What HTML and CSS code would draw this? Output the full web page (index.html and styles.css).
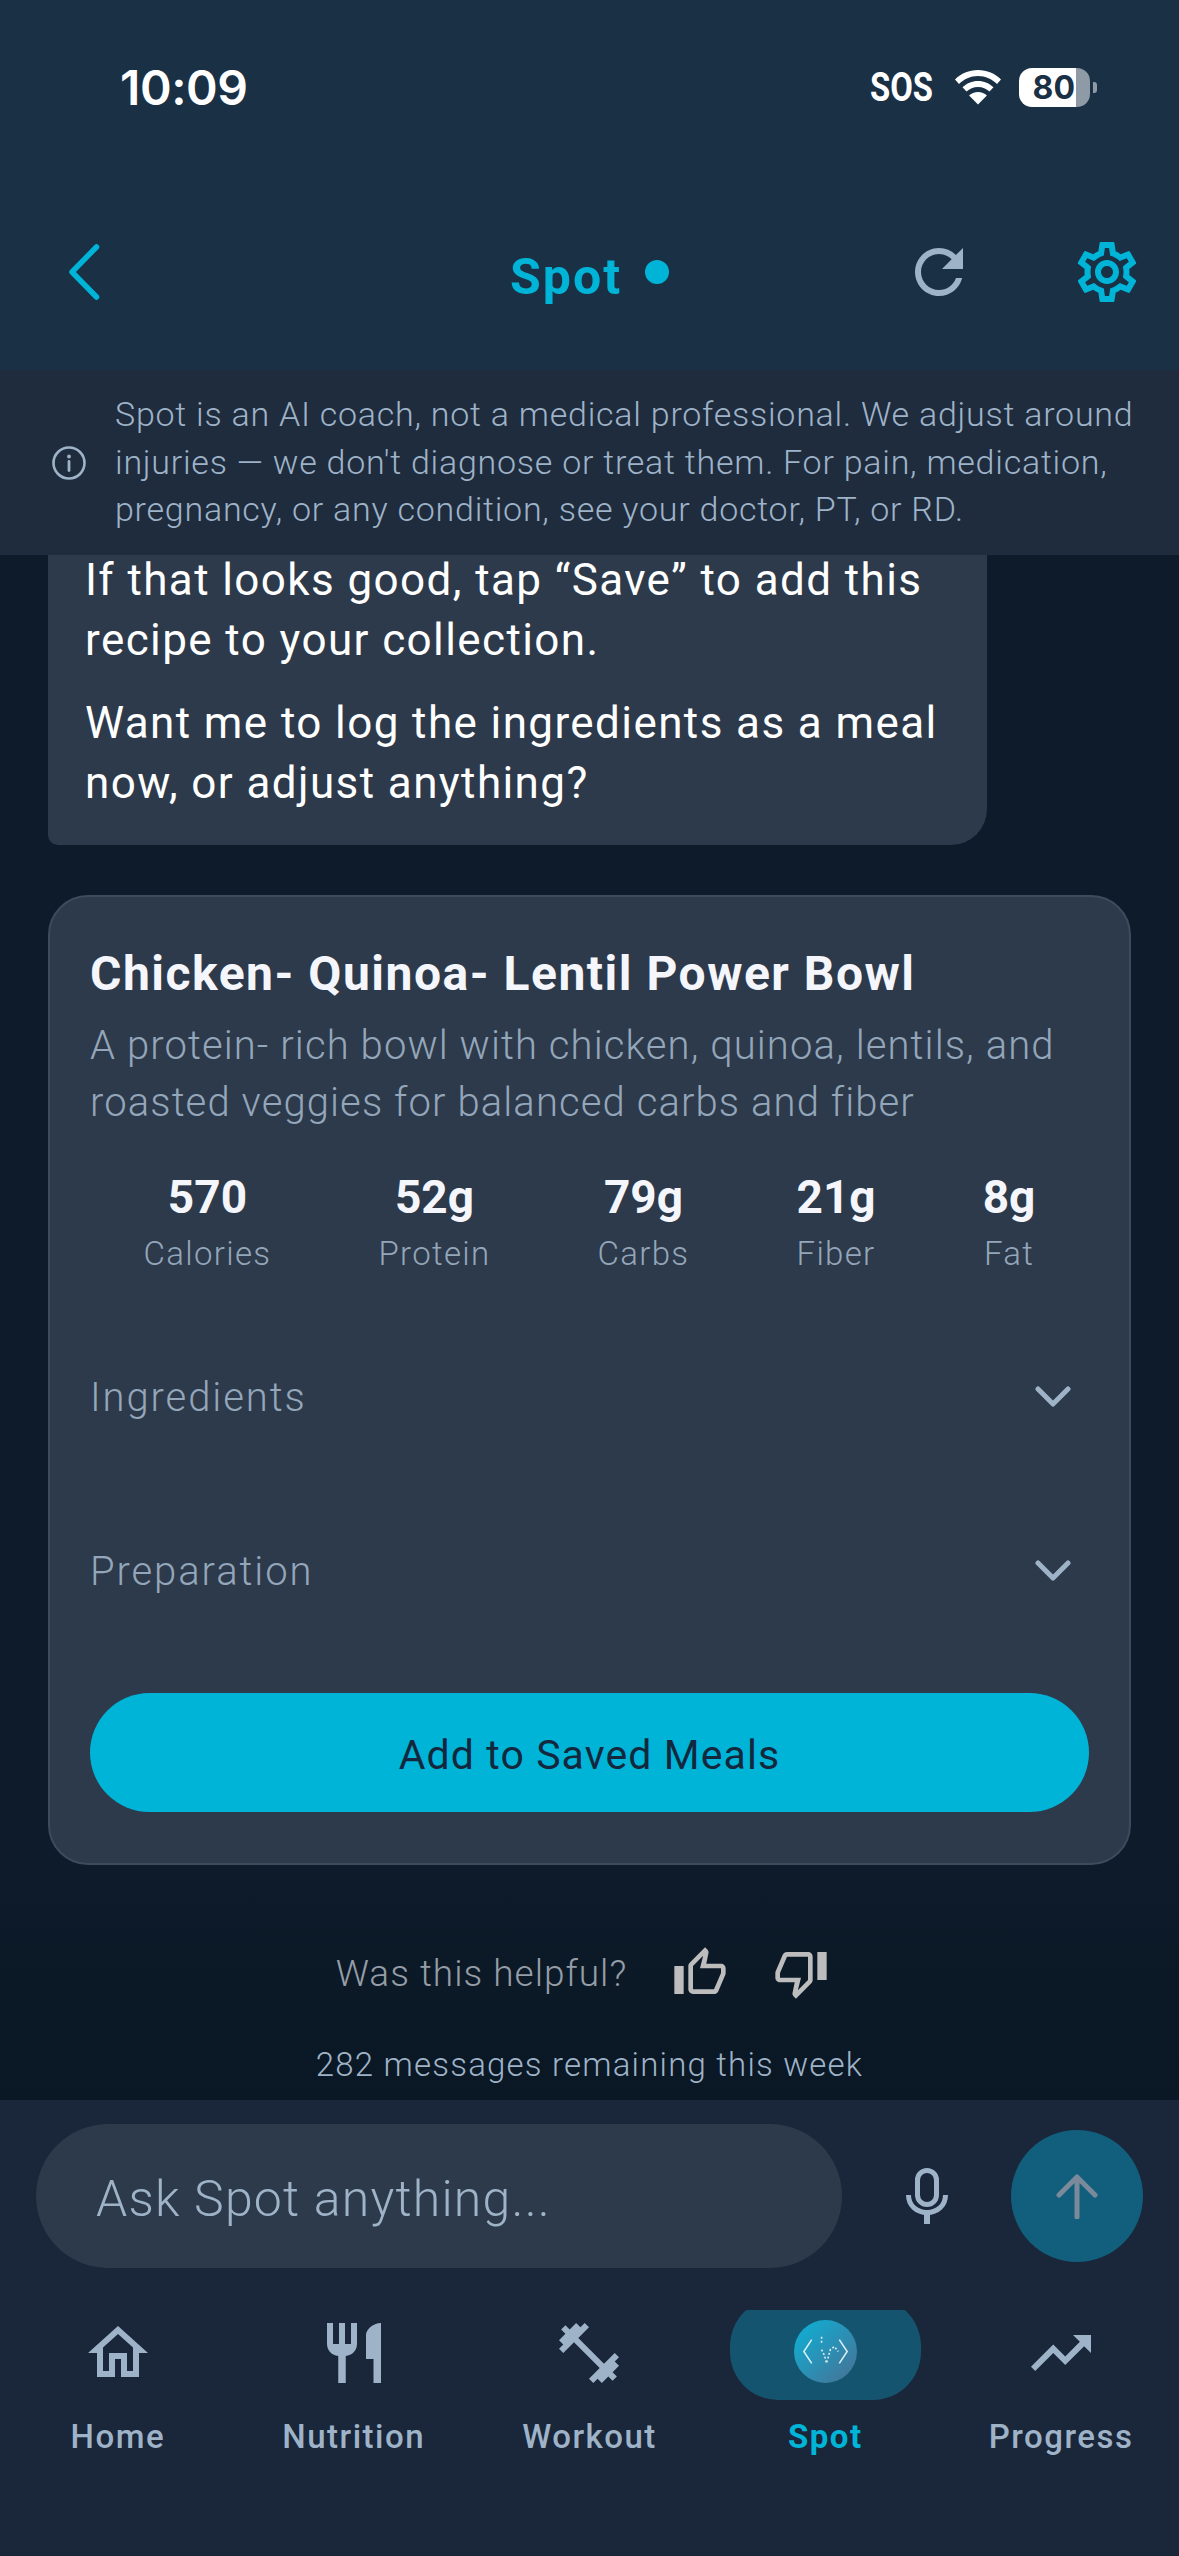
FILE: index.html
```html
<!DOCTYPE html>
<html lang="en">
<head>
<meta charset="utf-8">
<title>Spot</title>
<link rel="stylesheet" href="styles.css">
</head>
<body>
<div class="app">
  <header class="header">
    <div class="status">
      <span class="time">10:09</span>
      <div class="status-right">
        <span class="sos">SOS</span>
        <svg class="wifi" viewBox="0 0 48 36"><path d="M24 1C15 1 7 4.500 1 10.500l4 4.500C10 10 16.500 7 24 7s14 3 19 8l4-4.500C41 4.500 33 1 24 1z" fill="#fff"/><path d="M24 12c-6 0-11.500 2.300-15.500 6.300l4 4.300C15.500 19.700 19.500 18 24 18s8.500 1.700 11.500 4.600l4-4.300C35.500 14.300 30 12 24 12z" fill="#fff"/><path d="M24 23c-3.500 0-6.600 1.400-8.900 3.600L24 35.500l8.900-8.900C30.600 24.400 27.500 23 24 23z" fill="#fff"/></svg>
        <div class="battery"><span class="battery-fill">80</span><span class="battery-rest"></span></div>
        <span class="battery-nub"></span>
      </div>
    </div>
    <div class="topbar">
      <svg class="back" viewBox="0 0 32 56"><path d="M28.500 3 4 28l24.500 25" fill="none" stroke="#00b4d8" stroke-width="5.500" stroke-linecap="round" stroke-linejoin="round"/></svg>
      <div class="title"><span>Spot</span><i class="dot"></i></div>
      <svg class="refresh" viewBox="0 0 24 24"><path fill="#9fb3c8" d="M17.650 6.350A7.958 7.958 0 0 0 12 4c-4.420 0-7.990 3.580-7.990 8s3.570 8 7.990 8c3.730 0 6.840-2.550 7.730-6h-2.080A5.990 5.990 0 0 1 12 18c-3.310 0-6-2.690-6-6s2.690-6 6-6c1.660 0 3.140.690 4.220 1.780L13 11h7V4l-2.350 2.350z"/></svg>
      <svg class="gear" viewBox="0 0 24 24"><path fill="#00b4d8" d="M19.430 12.980c.040-.320.070-.640.070-.980 0-.340-.030-.660-.070-.980l2.110-1.650c.190-.150.240-.420.120-.640l-2-3.460c-.120-.220-.390-.300-.610-.220l-2.490 1c-.520-.400-1.080-.730-1.690-.980l-.380-2.650C14.460 2.180 14.250 2 14 2h-4c-.250 0-.460.180-.490.420l-.380 2.650c-.610.250-1.170.590-1.690.980l-2.490-1c-.230-.090-.490 0-.610.220l-2 3.460c-.130.220-.070.490.120.640l2.110 1.650c-.040.320-.070.650-.070.980 0 .330.030.660.070.980l-2.110 1.650c-.190.150-.240.420-.120.640l2 3.460c.120.220.390.300.610.220l2.490-1c.520.400 1.080.730 1.690.980l.380 2.650c.030.240.240.420.490.420h4c.250 0 .460-.180.490-.420l.380-2.650c.610-.250 1.170-.590 1.690-.980l2.490 1c.230.090.490 0 .610-.220l2-3.460c.120-.220.070-.490-.120-.640l-2.110-1.650zM17.450 11.270c.040.310.050.520.050.730 0 .210-.020.430-.050.730l-.140 1.130.890.700 1.080.840-.700 1.210-1.270-.510-1.040-.420-.900.680c-.430.320-.840.560-1.250.730l-1.060.430-.160 1.130-.200 1.350h-1.400l-.190-1.350-.160-1.130-1.060-.430c-.430-.180-.830-.410-1.230-.710l-.910-.700-1.060.430-1.270.510-.700-1.210 1.080-.84.890-.700-.140-1.130c-.030-.310-.050-.540-.050-.740s.020-.430.050-.730l.140-1.130-.890-.700-1.080-.840.700-1.210 1.270.510 1.040.420.900-.680c.430-.320.840-.560 1.250-.730l1.060-.430.160-1.130.200-1.350h1.390l.190 1.350.160 1.130 1.060.430c.430.180.830.410 1.230.710l.910.700 1.060-.430 1.270-.510.700 1.210-1.070.850-.890.700.140 1.130zM12 8c-2.210 0-4 1.790-4 4s1.790 4 4 4 4-1.790 4-4-1.790-4-4-4zm0 6c-1.100 0-2-.900-2-2s.900-2 2-2 2 .900 2 2-.900 2-2 2z"/></svg>
    </div>
  </header>

  <div class="notice">
    <svg class="info" viewBox="0 0 34 34"><circle cx="17" cy="17" r="15.500" fill="none" stroke="#9fb3c8" stroke-width="2.600"/><path d="M17 15.500v9" stroke="#9fb3c8" stroke-width="2.800" stroke-linecap="round"/><circle cx="17" cy="10.500" r="1.900" fill="#9fb3c8"/></svg>
    <p>Spot is an AI coach, not a medical professional. We adjust around injuries — we don't diagnose or treat them. For pain, medication, pregnancy, or any condition, see your doctor, PT, or RD.</p>
  </div>

  <main class="chat">
    <div class="bubble">
      <p>If that looks good, tap “Save” to add this recipe to your collection.</p>
      <p>Want me to log the ingredients as a meal now, or adjust anything?</p>
    </div>

    <section class="card">
      <h2>Chicken- Quinoa- Lentil Power Bowl</h2>
      <p class="desc">A protein- rich bowl with chicken, quinoa, lentils, and roasted veggies for balanced carbs and fiber</p>
      <div class="stats">
        <div class="stat"><b>570</b><span>Calories</span></div>
        <div class="stat"><b>52g</b><span>Protein</span></div>
        <div class="stat"><b>79g</b><span>Carbs</span></div>
        <div class="stat"><b>21g</b><span>Fiber</span></div>
        <div class="stat"><b>8g</b><span>Fat</span></div>
      </div>
      <div class="fold"><span>Ingredients</span><svg class="chev" viewBox="0 0 36 22"><path d="M3 3l15 15L33 3" fill="none" stroke="#9fb3c8" stroke-width="5" stroke-linecap="round" stroke-linejoin="round"/></svg></div>
      <div class="fold"><span>Preparation</span><svg class="chev" viewBox="0 0 36 22"><path d="M3 3l15 15L33 3" fill="none" stroke="#9fb3c8" stroke-width="5" stroke-linecap="round" stroke-linejoin="round"/></svg></div>
      <button class="save">Add to Saved Meals</button>
    </section>

    <div class="feedback">
      <span>Was this helpful?</span>
      <svg class="thumb" viewBox="0 0 24 24"><path fill="#bdbdbd" d="M9 21h9c.830 0 1.540-.500 1.840-1.220l3.020-7.050c.090-.230.140-.470.140-.730v-2c0-1.100-.900-2-2-2h-6.310l.950-4.570.030-.320c0-.410-.170-.790-.440-1.060L14.170 1 7.580 7.590C7.220 7.950 7 8.450 7 9v10c0 1.100.900 2 2 2zM9 9l4.340-4.340L12 10h9v2l-3 7H9V9zM1 9h4v12H1z"/></svg>
      <svg class="thumb" viewBox="0 0 24 24"><path fill="#bdbdbd" d="M15 3H6c-.830 0-1.540.500-1.840 1.220l-3.020 7.050c-.090.230-.140.470-.140.730v2c0 1.100.900 2 2 2h6.310l-.950 4.570-.030.320c0 .410.170.790.440 1.060L9.830 23l6.590-6.590c.360-.360.580-.860.580-1.410V5c0-1.100-.900-2-2-2zm0 12l-4.340 4.340L12 14H3v-2l3-7h9v10zm4-12h4v12h-4z"/></svg>
    </div>
    <p class="remaining">282 messages remaining this week</p>
  </main>

  <div class="composer">
    <div class="input">Ask Spot anything...</div>
    <div class="mic-wrap">
      <svg class="mic" viewBox="0 0 42 56"><rect x="11.500" y="2.500" width="19" height="34" rx="9.500" fill="none" stroke="#9fb3c8" stroke-width="5"/><path d="M2.500 27c0 10.500 8 17.500 18.500 17.500S39.500 37.500 39.500 27" fill="none" stroke="#9fb3c8" stroke-width="5"/><path d="M21 44v12" stroke="#9fb3c8" stroke-width="6"/></svg>
    </div>
    <button class="send"><svg viewBox="0 0 44 46"><path d="M22 44V4M4 22 22 4l18 18" fill="none" stroke="#7a8a9a" stroke-width="5" stroke-linecap="round" stroke-linejoin="round"/></svg></button>
  </div>

  <nav class="nav">
    <div class="nav-item">
      <div class="nav-icon"><svg viewBox="0 0 24 24"><path fill="#9fb3c8" d="M12 5.690l5 4.500V18h-2v-6H9v6H7v-7.810l5-4.500M12 3L2 12h3v8h6v-6h2v6h6v-8h3L12 3z"/></svg></div>
      <span>Home</span>
    </div>
    <div class="nav-item">
      <div class="nav-icon"><svg viewBox="0 0 24 24"><path fill="#9fb3c8" d="M11 9H9V2H7v7H5V2H3v7c0 2.120 1.660 3.840 3.750 3.970V22h2.500v-9.030C11.340 12.840 13 11.120 13 9V2h-2v7zm5-3v8h2.500v8H21V2c-2.760 0-5 2.240-5 4z"/></svg></div>
      <span>Nutrition</span>
    </div>
    <div class="nav-item">
      <div class="nav-icon"><svg viewBox="0 0 24 24"><path fill="#9fb3c8" d="M20.570 14.860L22 13.430 20.570 12 17 15.570 8.430 7 12 3.430 10.570 2 9.140 3.430 7.710 2 5.570 4.140 4.140 2.710 2.710 4.140l1.430 1.430L2 7.710l1.430 1.430L2 10.570 3.430 12 7 8.430 15.570 17 12 20.570 13.430 22l1.430-1.430L16.290 22l2.140-2.140 1.430 1.430 1.430-1.430-1.430-1.430L22 16.290z"/></svg></div>
      <span>Workout</span>
    </div>
    <div class="nav-item active">
      <div class="nav-pill">
        <div class="avatar"><svg viewBox="0 0 64 64"><path d="M18 20 10 32l8 12M46 20l8 12-8 12" fill="none" stroke="#dbeef5" stroke-width="1.600"/><path d="M28 17v8M28 30l3 6 2 8 4-14 4-3 4 5" fill="none" stroke="#dbeef5" stroke-width="1.600" stroke-dasharray="2 2"/></svg></div>
      </div>
      <span>Spot</span>
    </div>
    <div class="nav-item">
      <div class="nav-icon"><svg viewBox="0 0 24 24"><path fill="#9fb3c8" d="M16 6l2.290 2.290-4.880 4.880-4-4L2 16.590 3.410 18l6-6 4 4 6.300-6.290L22 12V6z"/></svg></div>
      <span>Progress</span>
    </div>
  </nav>
</div>
</body>
</html>
```
FILE: styles.css
```css
* { box-sizing: border-box; }
html, body { margin: 0; padding: 0; }
body { font-family: "Roboto", "Noto Sans", sans-serif; background: #0d1b2a; color: #fff; }
p, h2 { margin: 0; }
.app { width: 1179px; height: 2556px; display: flex; flex-direction: column; overflow: hidden; }

.header { height: 370px; background: #1a3045; flex: none; }
.status { height: 174px; display: flex; align-items: center; justify-content: space-between; padding: 0 82px 0 120px; }
.time { font-family: "Inter", sans-serif; font-weight: 600; font-size: 48px; letter-spacing: -0.4px; }
.status-right { display: flex; align-items: center; }
.sos { font-weight: 700; font-size: 41px; width: 84px; transform: scaleX(0.8); transform-origin: left center; }
.wifi { width: 48px; height: 36px; }
.battery { width: 71px; height: 39px; margin-left: 17px; border-radius: 13px; overflow: hidden; display: flex; }
.battery-fill { width: 57px; background: #fff; color: #1a3045; font-family: "Inter", sans-serif; font-weight: 700; font-size: 32px; line-height: 39px; text-align: right; padding-right: 1px; }
.battery-rest { flex: 1; background: #8e9aa6; }
.battery-nub { width: 4px; height: 11px; margin-left: 3px; background: #8e9aa6; border-radius: 0 3px 3px 0; }

.topbar { height: 196px; display: flex; align-items: center; position: relative; padding: 0 36px 0 68px; }
.back { width: 32px; height: 56px; }
.title { position: absolute; left: 510px; top: 50%; transform: translateY(-50%); display: flex; align-items: center; gap: 23px; color: #00b4d8; font-weight: 700; font-size: 50px; letter-spacing: 2px; }
.title span { position: relative; top: 5px; }
.dot { width: 24px; height: 24px; border-radius: 50%; background: #00b4d8; }
.refresh { width: 72px; height: 72px; margin-left: auto; }
.gear { width: 72px; height: 72px; margin-left: 96px; }

.notice { height: 185px; flex: none; background: #1e2c3e; display: flex; align-items: center; padding: 0 30px 0 52px; gap: 29px; }
.info { width: 34px; height: 34px; flex: none; }
.notice p { font-size: 34px; line-height: 47.5px; color: #9fb3c8; font-weight: 300; letter-spacing: 0.75px; }

.chat { flex: 1; min-height: 0; overflow: hidden; display: flex; flex-direction: column; justify-content: flex-end; padding: 0 48px; background: linear-gradient(#0d1b2a 85%, #0a1724); }
.bubble { flex: none; width: 939px; background: #2d3a4b; border-radius: 0 0 36px 10px; padding: 0 37px 32px; font-size: 44px; line-height: 60px; letter-spacing: 1.4px; }
.bubble p + p { margin-top: 23px; }

.card { flex: none; margin-top: 50px; background: #2d3a4b; border: 2px solid #3e4b5d; border-radius: 40px; padding: 47px 40px 51px; }
.card h2 { font-size: 48px; line-height: 60px; font-weight: 700; color: #f4f6fb; letter-spacing: 1.5px; }
.desc { margin-top: 13px; font-size: 40px; line-height: 57px; color: #94a6ba; font-weight: 300; letter-spacing: 1.1px; }
.stats { display: flex; justify-content: space-around; margin-top: 38px; margin-bottom: 29px; }
.stat { display: flex; flex-direction: column; align-items: center; }
.stat b { font-size: 46px; line-height: 56px; font-weight: 700; color: #f4f6fb; }
.stat span { font-size: 33px; line-height: 57px; color: #94a6ba; font-weight: 300; letter-spacing: 1.3px; margin-bottom: -1px; }
.fold { height: 174px; display: flex; align-items: center; justify-content: space-between; font-size: 40px; color: #94a6ba; font-weight: 300; letter-spacing: 1.9px; }
.chev { width: 36px; height: 22px; margin-right: 18px; }
.save { display: block; width: 100%; height: 119px; margin-top: 35px; padding: 5px 0 0; border: 0; border-radius: 60px; background: #00b4d8; color: #14283d; font-family: inherit; font-size: 41px; letter-spacing: 1.1px; }

.feedback { flex: none; margin-top: 80px; height: 56px; display: flex; align-items: center; justify-content: center; gap: 45px; padding-right: 14px; color: #959da6; font-size: 37px; font-weight: 300; letter-spacing: 1px; }
.thumb { width: 56px; height: 56px; }
.remaining { flex: none; margin-top: 36px; height: 56px; margin-bottom: 7px; line-height: 56px; text-align: center; font-size: 33px; color: #9fb3c8; font-weight: 300; letter-spacing: 1.2px; }

.composer { flex: none; height: 210px; background: #1a2639; display: flex; align-items: flex-start; padding: 24px 36px 0 36px; }
.input { width: 806px; height: 144px; border-radius: 72px; background: #2d3a4b; color: #9fb3c8; font-size: 50px; font-weight: 300; line-height: 150px; padding-left: 60px; letter-spacing: 1.2px; }
.mic-wrap { flex: 1; height: 144px; display: flex; align-items: center; justify-content: center; }
.mic { width: 42px; height: 56px; }
.send { width: 132px; height: 132px; margin-top: 6px; flex: none; border: 0; padding: 0; border-radius: 50%; background: #115f7c; display: flex; align-items: center; justify-content: center; }
.send svg { width: 44px; height: 46px; }

.nav { flex: none; height: 246px; background: #1a2639; display: grid; grid-template-columns: repeat(5, 1fr); overflow: hidden; }
.nav-item { display: flex; flex-direction: column; align-items: center; color: #9fb3c8; font-size: 33px; font-weight: 500; letter-spacing: 1.5px; }
.nav-icon { height: 86px; margin-bottom: 4px; display: flex; align-items: center; }
.nav-icon svg { width: 72px; height: 72px; }
.nav-item span { margin-top: 15px; line-height: 44px; }
.nav-pill { width: 191px; height: 102px; margin-top: -12px; border-radius: 48px; background: #15546f; display: flex; align-items: center; justify-content: center; }
.avatar { width: 63px; height: 63px; border-radius: 50%; background: linear-gradient(135deg, #0bb3d9, #4a6f92); margin-top: 4px; }
.avatar svg { display: block; width: 63px; height: 63px; }
.active span { color: #00b4d8; font-weight: 700; }
```
